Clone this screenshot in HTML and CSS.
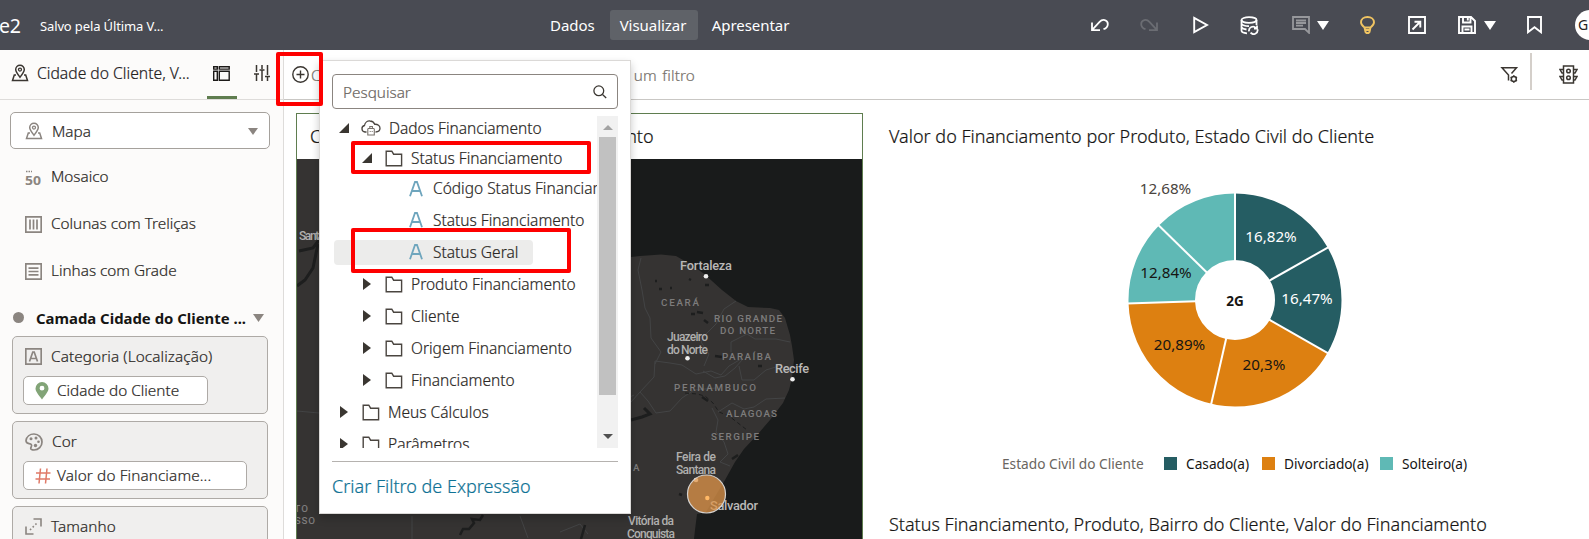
FILE: index.html
```
<!DOCTYPE html>
<html lang="pt-BR">
<head>
<meta charset="utf-8">
<title>Visualizar</title>
<link rel="stylesheet" href="styles.css">
</head>
<body>
<svg class="defs" width="0" height="0" aria-hidden="true">
  <defs>
    <symbol id="folder" viewBox="0 0 18 17"><path d="M1.200 15.800V1.200h5.600l1.800 3h8v11.600z" fill="none" stroke="#4a4540" stroke-width="1.400"/></symbol>
    <symbol id="mappin" viewBox="0 0 18 18"><path d="M9 13.200C6.200 9.800 4.700 8 4.700 5.600a4.300 4.300 0 0 1 8.600 0c0 2.400-1.500 4.200-4.300 7.600zM5 11H3.300l-1.800 5.600h15L14.700 11H13" fill="none" stroke="currentColor" stroke-width="1.500"/><circle cx="9" cy="5.600" r="1.500" fill="none" stroke="currentColor" stroke-width="1.300"/></symbol>
    <symbol id="attr" viewBox="0 0 14 16"><path d="M1 15.300 6 1h2l5 14.300M3 10h8" fill="none" stroke="#6ea5bd" stroke-width="1.800"/></symbol>
  </defs>
</svg>

<header class="topbar">
  <div class="doc"><span class="doc-name">e2</span><span class="doc-status">Salvo pela Última V...</span></div>
  <nav class="modes"><span class="mode">Dados</span><span class="mode active">Visualizar</span><span class="mode">Apresentar</span></nav>
  <div class="tools">
    <svg class="t-undo" width="18" height="14" viewBox="0 0 18 14" fill="none" stroke="#fff" stroke-width="1.800"><path d="M1 4.500v7.600h8M1.400 11.700 8.600 3.800C11.400.600 16.800 1.500 16.800 6c0 2.700-1.800 4.500-4.300 5.200"/></svg>
    <svg class="t-redo" width="18" height="14" viewBox="0 0 18 14" fill="none" stroke="#6b6d73" stroke-width="1.800"><path d="M17 4.500v7.600H9M16.600 11.700 9.400 3.800C6.600.600 1.200 1.500 1.200 6c0 2.700 1.800 4.500 4.300 5.200"/></svg>
    <svg class="t-play" width="16" height="18" viewBox="0 0 16 18" fill="none" stroke="#fff" stroke-width="1.900"><path d="M1.200 1.800v14.400L14 9z"/></svg>
    <svg class="t-db" width="19" height="19" viewBox="0 0 19 19" fill="none" stroke="#fff" stroke-width="1.800"><ellipse cx="9" cy="4" rx="7.500" ry="2.800"/><path d="M1.500 4v10.500c0 1.500 2.500 2.500 5.500 2.800M16.500 4v5M1.500 7.800C3 9.800 6 10.300 9 10.200M1.500 11.300c1 1.500 3 2 5 2.200M9 15.300a4 4 0 0 1 7-3.200M17 9.600v3h-3M17.600 13.500a4 4 0 0 1-7 3.200"/></svg>
    <svg class="t-note" width="18" height="18" viewBox="0 0 18 18" fill="none" stroke="#97989c" stroke-width="1.800"><path d="M1 1h16v15.800L13 13H1zM4 4.500h10M4 7h10M4 9.600h7"/></svg>
    <svg class="t-caret" width="12" height="9" viewBox="0 0 12 9"><path d="M0 0h12L6 9z" fill="#fff"/></svg>
    <svg class="t-bulb" width="15" height="18" viewBox="0 0 15 18" fill="none" stroke="#f0c462" stroke-width="1.900"><path d="M4.500 11.500C2.500 10 1 8.700 1 6.300 1 3 3.800 1 7.500 1S14 3 14 6.300c0 2.400-1.500 3.700-3.500 5.200zM4.500 11.500l1 4.500 1 1h2l1-1 1-4.500M5 14h5"/></svg>
    <svg class="t-export" width="18" height="18" viewBox="0 0 18 18" fill="none" stroke="#fff" stroke-width="1.900"><path d="M1 1h16v16H1zM4.500 13.500l7.500-7.500M6.500 5.700h5.800v5.800"/></svg>
    <svg class="t-save" width="18" height="18" viewBox="0 0 18 18" fill="none" stroke="#fff" stroke-width="1.900"><path d="M1 1h12l4 4v12H1zM5 1v5.500h7.500V1M9.800 2v2.500M4.500 17v-6.500h9V17M6.500 13.500h5"/></svg>
    <svg class="t-caret last" width="12" height="9" viewBox="0 0 12 9"><path d="M0 0h12L6 9z" fill="#fff"/></svg>
    <svg class="t-mark" width="15" height="18" viewBox="0 0 15 18" fill="none" stroke="#fff" stroke-width="1.900"><path d="M1 1h13v15.200l-6.500-5L1 16.200z"/></svg>
    <span class="avatar">G</span>
  </div>
</header>

<main class="work">
  <aside class="side">
    <div class="side-head">
      <svg class="pin" width="18" height="18"><use href="#mappin"/></svg>
      <span class="side-title">Cidade do Cliente, V...</span>
      <span class="tab"><svg width="17" height="15" viewBox="0 0 17 15" fill="none" stroke="#1c1a18" stroke-width="1.400"><path d="M.700.700h3.600v2.400H.700zM6.300.700h9.900v2.400H6.300zM.700 5.300h3.600v9H.700zM6.300 5.300h9.900v9H6.300z"/></svg></span>
      <svg class="sliders" width="16" height="17" viewBox="0 0 16 17" fill="none" stroke="#3a3631" stroke-width="1.500"><path d="M2.500 0v7M2.500 9v7M0 9h5M8 0v4M8 5v11M5.500 5h5M13.500 0v10M13.500 12v4M11 11.500h5"/></svg>
    </div>
    <div class="select">
      <svg width="18" height="18"><use href="#mappin"/></svg><span>Mapa</span>
      <svg class="down" width="10" height="7" viewBox="0 0 10 7"><path d="M0 0h10L5 7z" fill="#8b8580"/></svg>
    </div>
    <div class="kind"><svg class="tile" width="17" height="17" viewBox="0 0 17 17"><path d="M1 2.500h6" stroke="#8b8580" stroke-width="1.500" stroke-dasharray="1.500 1"/><text x="0" y="15.500" class="fifty" textLength="16" lengthAdjust="spacingAndGlyphs">50</text></svg><span>Mosaico</span></div>
    <div class="kind"><svg width="17" height="17" viewBox="0 0 17 17" fill="none" stroke="#8b8580" stroke-width="1.700"><path d="M.800.800h15.400v15.400H.800zM5 3.500v10M8.500 3.500v10M12 3.500v10"/></svg><span>Colunas com Treliças</span></div>
    <div class="kind"><svg width="17" height="17" viewBox="0 0 17 17" fill="none" stroke="#8b8580" stroke-width="1.700"><path d="M.800.800h15.400v15.400H.800zM3.500 5.200h10M3.500 8.500h10M3.500 11.800h10"/></svg><span>Linhas com Grade</span></div>
    <div class="layer"><i class="dot"></i><b>Camada Cidade do Cliente ...</b><svg width="11" height="8" viewBox="0 0 11 8"><path d="M0 0h11L5.500 8z" fill="#8b8580"/></svg></div>
    <section class="card">
      <div class="card-head"><svg width="17" height="17" viewBox="0 0 17 17" fill="none" stroke="#8b8580" stroke-width="1.700"><path d="M.800.800h15.400v15.400H.800zM4.500 13.500l3.300-9.500h1.400l3.300 9.500M6 10.500h5"/></svg><span>Categoria (Localização)</span></div>
      <div class="chip chip-a"><svg width="14" height="18" viewBox="0 0 14 18"><path d="M7 17.500C3 12 .500 9.500.500 6.500a6.500 6.500 0 0 1 13 0c0 3-2.500 5.500-6.500 11zM7 3.800a2.400 2.400 0 1 0 0 4.800 2.400 2.400 0 0 0 0-4.800z" fill="#82a477" fill-rule="evenodd"/></svg><span>Cidade do Cliente</span></div>
    </section>
    <section class="card">
      <div class="card-head"><svg width="18" height="18" viewBox="0 0 18 18" fill="none" stroke="#8b8580" stroke-width="1.700"><path d="M1 7.500C1.600 3.800 4.800 1 9 1c4.600 0 8 3.400 8 8s-3.400 8-8 8c-1.800 0-3.600-.6-3.300-1.800.4-1.500 1.600-2.400.6-3.700C5 9.800 1 12 1 7.500z"/><g fill="#8b8580" stroke="none"><circle cx="6" cy="5.800" r="1.500"/><circle cx="11" cy="5" r="1.500"/><circle cx="13.500" cy="8.800" r="1.300"/><circle cx="10.500" cy="12.500" r="1.700"/></g></svg><span>Cor</span></div>
      <div class="chip chip-b"><svg width="16" height="16" viewBox="0 0 16 16" stroke="#e07a68" stroke-width="1.500"><path d="M1 5h14.500M.500 11H15M5.500.500l-1.500 15M12 .500l-1.500 15"/></svg><span>Valor do Financiame...</span></div>
    </section>
    <section class="card">
      <div class="card-head"><svg width="17" height="17" viewBox="0 0 17 17" fill="none" stroke="#8b8580" stroke-width="1.600"><path d="M8.500 1H16v7.500M1 8.500V16h7.500"/><path d="M5 12l7-7" stroke-dasharray="1.600 2.200"/></svg><span>Tamanho</span></div>
      <div class="chip chip-b"></div>
    </section>
  </aside>

  <section class="canvas">
    <div class="filters">
      <svg class="plus" width="17" height="17" viewBox="0 0 17 17" fill="none" stroke="#3a3631" stroke-width="1.400"><circle cx="8.500" cy="8.500" r="7.700"/><path d="M8.500 4.500v8M4.500 8.500h8"/></svg>
      <span class="hint">Clique aqui ou arraste dados para adicionar um filtro</span>
      <svg class="funnel" width="19" height="18" viewBox="0 0 19 18" fill="none" stroke="#3a3631" stroke-width="1.500"><path d="M8.500 14.500V9L2 1.800h14.500L11.500 7.500"/><circle cx="13.800" cy="13" r="2.500"/><path d="M13.800 9.300v1.200M13.800 15.500v1.300M10.600 11.200l1.100.6M15.900 14.200l1.100.6M10.600 14.800l1.100-.6M15.900 11.800l1.100-.6"/></svg>
      <i class="rule"></i>
      <svg class="lights" width="19" height="19" viewBox="0 0 19 19" fill="none" stroke="#3a3631" stroke-width="1.500"><path d="M4.500 1h10v17h-10z"/><circle cx="9.500" cy="6" r="1.800"/><circle cx="9.500" cy="12.700" r="1.800"/><path d="M4.500 4.500H1L3 8h1.500M4.500 11.500H1l2 3.500h1.500M14.500 4.500H18L16 8h-1.500M14.500 11.500H18l-2 3.500h-1.500"/></svg>
    </div>
    <div class="boards">
      <article class="mapcard">
        <h2>Cidade do Cliente, Valor do Financiamento</h2>
        <svg class="map" width="565" height="380" viewBox="297 159 565 380">
          <path fill="#353332" d="M297 159H631V257L640 256 661 254.500 676 256 690 264 703 273 712 281 722 290 736 301 748 307 770 308 779 310 785 318 790 335 792 346 794 360 792 378 789 390 783 403 770 420 758 434 744 449 735 462 725 480 716 495 706 512 697 514 695 530 694 539H297z"/>
          <g fill="none" stroke="#434445" stroke-width="1">
            <path d="M641 258l-3 12 4 20 3 18 5 10 1 20 10 14-6 12M655 361l15 2 12 2 14 9 15-3 10 4 8-9 12-7M655 361l-1 16-14 15-9 10M640 392l8 9 8 12 14-2 12-13 12-8 22-2M736 301l-12 8-8 15-10 10-5 8 8 12-5 12M790 342l-14-3-21 0-8-5-16 8 0 10M785 398l-19 1-12 8-10 2-12-6-14 9M703 371l12 7 10-2 10-8 7-8M739 366l3 14 12 0 12-10 13-4M712 408l6 12-2 12 8 10 4 12-8 8 10 4M297 411l22 2M620 402l14-7M412 516l0 24M520 516l8 22M560 532l20-8 8 10"/>
          </g>
          <g stroke="#1d1e1e" fill="none">
            <path d="M319 240l-6 8-14 3M318 244l-5 24-8 12-8 6" stroke-width="3"/>
            <path d="M631 420l11-3 8-3-6-6" stroke-width="3"/>
            <path d="M685 393l12 1 8 2 8 7 6 9 10 4 18 14" stroke-width="1" stroke-dasharray="4 3"/>
            <path d="M460 535l3-6 6 0 5-6-2-4 8 1 3-5M585 525l-4 14" stroke-width="2.500"/>
            <path d="M697 312l6 1M704 320l4 3M691 314l4 0M659 289l3 0M655 281l2 0M715 356l7 1M702 397l6 4M732 459l6-4M689 279l2 1M670 288l2 0M705 285l4 0M758 366l4 0M679 494l3 1" stroke-width="2.500"/>
          </g>
          <g class="lab region">
            <text x="661" y="305.500" textLength="38">CEARÁ</text>
            <text x="714" y="322" textLength="68">RIO GRANDE</text>
            <text x="720" y="334" textLength="55">DO NORTE</text>
            <text x="722" y="360" textLength="49">PARAÍBA</text>
            <text x="674" y="391" textLength="82">PERNAMBUCO</text>
            <text x="726" y="417" textLength="51">ALAGOAS</text>
            <text x="711" y="440" textLength="48">SERGIPE</text>
            <text x="633" y="471">A</text>
            <text x="287" y="512" textLength="21">ATO</text>
            <text x="273" y="524" textLength="42">GROSSO</text>
          </g>
          <g class="lab town">
            <text x="299" y="240" textLength="42">Santarém</text>
            <text class="big" x="680" y="269.500" textLength="52">Fortaleza</text>
            <text x="667" y="341" textLength="41">Juazeiro</text>
            <text x="667" y="353.500" textLength="41">do Norte</text>
            <text class="big" x="775" y="372.500" textLength="34">Recife</text>
            <text x="676" y="461" textLength="40">Feira de</text>
            <text x="676" y="474" textLength="40">Santana</text>
            <text x="628" y="525" textLength="46">Vitória da</text>
            <text x="627" y="538" textLength="48">Conquista</text>
          </g>
          <g fill="#eee"><circle cx="706" cy="276.300" r="2.300"/><circle cx="687.500" cy="358.300" r="2.300"/><circle cx="792.500" cy="379.300" r="2.300"/><circle cx="696" cy="480" r="2.300"/></g>
          <g class="lab town"><text class="big" x="710" y="509.500" textLength="48">Salvador</text></g>
          <circle cx="706.500" cy="494" r="19" fill="#e0964a" fill-opacity=".75" stroke="#d6d3d0" stroke-width="1.200"/>
          <circle cx="707.300" cy="498" r="2.200" fill="#ffb866"/>
        </svg>
      </article>
      <article class="charts">
        <h2>Valor do Financiamento por Produto, Estado Civil do Cliente</h2>
        <svg class="donut" width="260" height="250" viewBox="-130 -130 260 250">
          <g fill="none" stroke-width="66.500" transform="rotate(-90)">
            <circle r="73.250" pathLength="100" stroke="#255d63" stroke-dasharray="33.290 66.710"/>
            <circle r="73.250" pathLength="100" stroke="#dd8011" stroke-dasharray="41.190 58.810" stroke-dashoffset="-33.290"/>
            <circle r="73.250" pathLength="100" stroke="#5fb9b5" stroke-dasharray="25.520 74.480" stroke-dashoffset="-74.480"/>
          </g>
          <g stroke="#fff" stroke-width="2">
            <path d="M0-39V-108"/><path d="M0-39V-108" transform="rotate(60.550)"/><path d="M0-39V-108" transform="rotate(119.840)"/><path d="M0-39V-108" transform="rotate(192.900)"/><path d="M0-39V-108" transform="rotate(268.100)"/><path d="M0-39V-108" transform="rotate(314.350)"/>
          </g>
          <g class="pct">
            <text class="inv" x="36" y="-58">16,82%</text><text class="inv" x="72" y="4">16,47%</text>
            <text x="29" y="70">20,3%</text><text x="-55.500" y="50">20,89%</text><text x="-69" y="-22">12,84%</text><text class="out" x="-69.500" y="-106">12,68%</text>
            <text class="total" x="0" y="5.500">2G</text>
          </g>
        </svg>
        <div class="legend"><span class="legend-title">Estado Civil do Cliente</span><i class="sw c1"></i><span class="k1">Casado(a)</span><i class="sw c2"></i><span class="k2">Divorciado(a)</span><i class="sw c3"></i><span>Solteiro(a)</span></div>
        <h2 class="next">Status Financiamento, Produto, Bairro do Cliente, Valor do Financiamento</h2>
      </article>
    </div>
  </section>
</main>

<div class="popup">
  <div class="search"><span>Pesquisar</span><svg width="14" height="14" viewBox="0 0 14 14" fill="none" stroke="#3a3631" stroke-width="1.300"><circle cx="5.800" cy="5.800" r="4.900"/><path d="M9.500 9.500l3.700 3.500"/></svg></div>
  <div class="treebox">
    <div class="tree">
      <div class="row root"><i class="open"></i><svg width="20" height="16" viewBox="0 0 20 16" fill="none" stroke="#4a4540" stroke-width="1.300"><path d="M5.500 12H4A3.300 3.300 0 0 1 3.500 5.500C4 2.500 6.500.800 9 1c2.500.100 4 1.500 4.700 3.300 3-.3 5.300 1.700 5.300 4 0 2.200-1.600 3.600-4.500 3.700"/><path d="M7 8.500h6M6.800 8.500v6.500h6.500V8.500M8.800 8V6.500h2.600V8M8.700 11.500h1M10.700 11.500h1" stroke="#77716b" stroke-width="1.100"/></svg><span>Dados Financiamento</span></div>
      <div class="row lvl"><i class="open"></i><svg width="18" height="17"><use href="#folder"/></svg><span>Status Financiamento</span></div>
      <div class="row leaf short"><svg width="14" height="16"><use href="#attr"/></svg><span>Código Status Financiamento</span></div>
      <div class="row leaf"><svg width="14" height="16"><use href="#attr"/></svg><span>Status Financiamento</span></div>
      <div class="row leaf"><div class="hit"><svg width="14" height="16"><use href="#attr"/></svg><span>Status Geral</span></div></div>
      <div class="row lvl"><i class="shut"></i><svg width="18" height="17"><use href="#folder"/></svg><span>Produto Financiamento</span></div>
      <div class="row lvl"><i class="shut"></i><svg width="18" height="17"><use href="#folder"/></svg><span>Cliente</span></div>
      <div class="row lvl"><i class="shut"></i><svg width="18" height="17"><use href="#folder"/></svg><span>Origem Financiamento</span></div>
      <div class="row lvl"><i class="shut"></i><svg width="18" height="17"><use href="#folder"/></svg><span>Financiamento</span></div>
      <div class="row top"><i class="shut"></i><svg width="18" height="17"><use href="#folder"/></svg><span>Meus Cálculos</span></div>
      <div class="row top"><i class="shut"></i><svg width="18" height="17"><use href="#folder"/></svg><span>Parâmetros</span></div>
    </div>
    <div class="scroll"><i class="up"></i><i class="thumb"></i><i class="dn"></i></div>
  </div>
  <div class="popup-foot">Criar Filtro de Expressão</div>
</div>

<div class="mark m1"></div><div class="mark m2"></div><div class="mark m3"></div>
</body>
</html>
```
FILE: styles.css
```
* { box-sizing: border-box; }
body { margin: 0; height: 539px; position: relative; overflow: hidden; background: #fff; color: #2b2825; font: 300 15.300px "Noto Sans", "Open Sans", sans-serif; white-space: nowrap; }
svg { display: block; flex: none; }
i { flex: none; }
.defs { position: absolute; }
h2 { margin: 0; font-size: 18px; font-weight: 300; color: #161513; }
.side, .popup, .hint, h2 { -webkit-text-stroke: .2px currentColor; }

/* top bar */
.topbar { display: flex; height: 50px; background: #494b53; color: #fff; align-items: center; font-weight: 400; }
.doc { width: 536px; display: flex; align-items: center; flex: none; }
.doc-name { font-size: 19.500px; width: 40px; letter-spacing: -.2px; margin-left: -1px; margin-right: 1px; }
.doc-status { font-size: 13px; letter-spacing: -.13px; padding-top: 1px; }
.modes { display: flex; flex: none; width: 555px; font-size: 15px; line-height: 30px; }
.mode { padding: 0 15px 0 14px; letter-spacing: -.04px; }
.mode.active { background: #5f6268; border-radius: 3px; padding: 0 10px; width: 88px; }
.tools { display: flex; align-items: center; flex: 1; overflow: hidden; height: 50px; }
.t-redo { margin-left: 31px; }
.t-play { margin-left: 35px; }
.t-db { margin-left: 31px; }
.t-note { margin-left: 33px; }
.t-caret { margin-left: 7px; }
.t-caret.last { margin-left: 8px; }
.t-bulb { margin-left: 31px; }
.t-export { margin-left: 33px; }
.t-save { margin-left: 32px; }
.t-mark { margin-left: 31px; }
.avatar { flex: none; margin-left: 33px; width: 30px; height: 30px; border-radius: 50%; background: #fff; color: #222; font: 400 14px/30px "Noto Sans", sans-serif; padding-left: 3px; }

.work { display: flex; height: 489px; }

/* side panel */
.side { width: 284px; flex: none; background: #fcfbfa; border-right: 1px solid #dedcda; overflow: hidden; }
.side-head { height: 50px; display: flex; border-bottom: 1px solid #dedcda; align-items: center; padding: 0 0 3px 11px; color: #3a3631; }
.side-title { margin-left: 8px; width: 170px; color: #24211e; font-size: 15.700px; }
.tab { width: 30px; height: 49px; margin-bottom: -3px; border-bottom: 3px solid #5f7d4f; display: flex; justify-content: center; padding-top: 16px; }
.tab svg { margin-left: -1px; }
.sliders { margin-left: 17px; }
.select { margin: 12px 13px 4px 10px; height: 37px; border: 1px solid #a5a19c; border-radius: 5px; background: #fff; display: flex; align-items: center; padding: 0 11px 0 14px; color: #8b8580; }
.select span { flex: 1; margin-left: 9px; color: #2b2825; }
.down { margin-top: 2px; }
.kind { height: 47px; display: flex; align-items: center; padding: 0 0 2px 25px; gap: 9px; }
.kind svg { margin-top: 4px; }
.tile { overflow: visible; }
.fifty { font: 700 13px "Noto Sans", sans-serif; fill: #8b8580; }
.layer { height: 42px; padding: 6px 0 0 13px; display: flex; align-items: center; }
.dot { width: 11px; height: 11px; border-radius: 50%; background: #8b8580; margin: -2px 12px 0 0; }
.layer b { width: 217px; color: #161513; font-weight: 700; font-size: 14.900px; -webkit-text-stroke: 0; }
.card { margin: 0 15px 7px 12px; height: 78px; border: 1px solid #aeaaa6; border-radius: 5px; background: #f0efee; padding-left: 10px; }
.card-head { height: 39px; display: flex; align-items: center; gap: 9px; padding-left: 2px; letter-spacing: .1px; }
.card-head span { margin-top: -1px; }
.chip { height: 29px; border: 1px solid #aeaaa6; border-radius: 5px; background: #fff; display: flex; align-items: center; padding-left: 11px; gap: 7px; }
.chip span { margin-top: -2px; }
.chip-a { width: 185px; gap: 8px; }
.chip-b { width: 224px; }
.chip-b span { letter-spacing: .12px; margin-left: -1px; }

/* canvas */
.canvas { flex: 1; }
.filters { height: 50px; border-bottom: 1px solid #c9c7c4; display: flex; align-items: center; padding-left: 8px; }
.plus { margin-right: 2px; }
.hint { width: 384px; letter-spacing: .14px; text-align-last: justify; color: #77716b; }
.funnel { margin-left: 805px; }
.rule { width: 2px; height: 37px; background: #d4cfca; margin-left: 11px; margin-top: -6px; }
.lights { margin-left: 27px; }
.boards { display: flex; padding: 13px 0 0 12px; }
.mapcard { width: 567px; flex: none; border: 1px solid #5f7d4f; border-bottom: 0; height: 426px; }
.mapcard h2 { height: 45px; line-height: 44px; padding-left: 13px; letter-spacing: -.04px; }
.map { background: #191b1b; }
.charts { flex: 1; display: flex; flex-direction: column; padding-left: 26px; }
.charts h2 { line-height: 44px; height: 57px; padding-top: 1px; }
.donut { margin-left: 215.500px; }
.pct { font: 400 15.200px "Noto Sans", sans-serif; text-anchor: middle; fill: #161513; }
.inv { fill: #fff; }
.out { fill: #4a4540; }
.total { font-weight: 700; font-size: 13.500px; }
.legend { display: flex; align-items: center; height: 20px; margin: 33px 0 0 113px; font-size: 13.700px; font-weight: 400; color: #161513; }
.legend-title { width: 162px; color: #6a6560; font-size: 13.700px; }
.sw { width: 13px; height: 13px; margin-right: 9px; }
.c1 { background: #255d63; } .c2 { background: #dd8011; } .c3 { background: #5fb9b5; }
.k1 { width: 76px; } .k2 { width: 96px; }
.charts h2.next { margin-top: 29px; padding: 0; }

/* map labels */
.lab { font-family: Roboto, "Noto Sans", sans-serif; }
.region text { font-size: 9.800px; font-weight: 500; fill: #7d7c7c; }
.town text { font-size: 12px; font-weight: 500; fill: #b0afae; }
.town .big { font-size: 12.800px; fill: #b9b8b7; }

/* filter popup */
.popup { position: absolute; left: 319px; top: 60px; width: 312px; height: 454px; background: #fff; border: 1px solid #dbd9d7; box-shadow: 0 4px 8px rgba(0,0,0,.22); padding: 13px 12px 0; }
.search { height: 35px; border: 1px solid #8b8580; border-radius: 4px; display: flex; justify-content: space-between; align-items: center; padding: 1px 10px 0 10px; color: #6a6560; }
.treebox { height: 332px; margin-top: 7px; display: flex; }
.tree { width: 265px; height: 332px; overflow: hidden; }
.row { height: 32px; display: flex; align-items: center; font-size: 15.500px; }
.root { height: 24px; margin-bottom: 3px; padding-left: 7px; line-height: 20px; }
.root svg { margin: 0 8px 0 12px; }
.lvl { padding-left: 30px; }
.root + .lvl { height: 30px; }
.lvl svg, .top svg { margin: 0 8px 0 13px; }
.top { padding-left: 8px; }
.leaf { padding-left: 77px; }
.leaf svg { margin-right: 10px; }
.short { height: 31px; }
.short span { margin-top: -1px; }
.hit { margin-left: -75px; padding-left: 75px; width: 199px; height: 25px; border-radius: 4px; background: #ececeb; display: flex; align-items: center; }
.open { border: 5px solid transparent; border-right-color: #3a3631; border-bottom-color: #3a3631; margin-top: -1px; }
.shut { border: 6px solid transparent; border-left: 8px solid #3a3631; border-right: 0; margin-right: 1px; }
.lvl .shut { margin-left: 1px; }
.scroll { width: 21px; background: #f1f1f1; display: flex; flex-direction: column; align-items: center; }
.up { margin-top: 9px; border: 5px solid transparent; border-top: 0; border-bottom-color: #a3a3a3; }
.thumb { width: 17px; height: 258px; background: #c1c1c1; margin-top: 7px; }
.dn { margin-top: 39px; border: 5px solid transparent; border-bottom: 0; border-top-color: #505050; }
.popup-foot { margin-top: 13px; border-top: 1px solid #b5b2af; color: #0f7295; font-size: 18px; line-height: 49px; }

/* highlight frames */
.mark { position: absolute; border: 4px solid #fe0000; border-radius: 2px; }
.m1 { left: 276px; top: 52px; width: 47px; height: 54px; }
.m2 { left: 351px; top: 141px; width: 240px; height: 33px; }
.m3 { left: 351px; top: 228px; width: 220px; height: 45px; }
```
